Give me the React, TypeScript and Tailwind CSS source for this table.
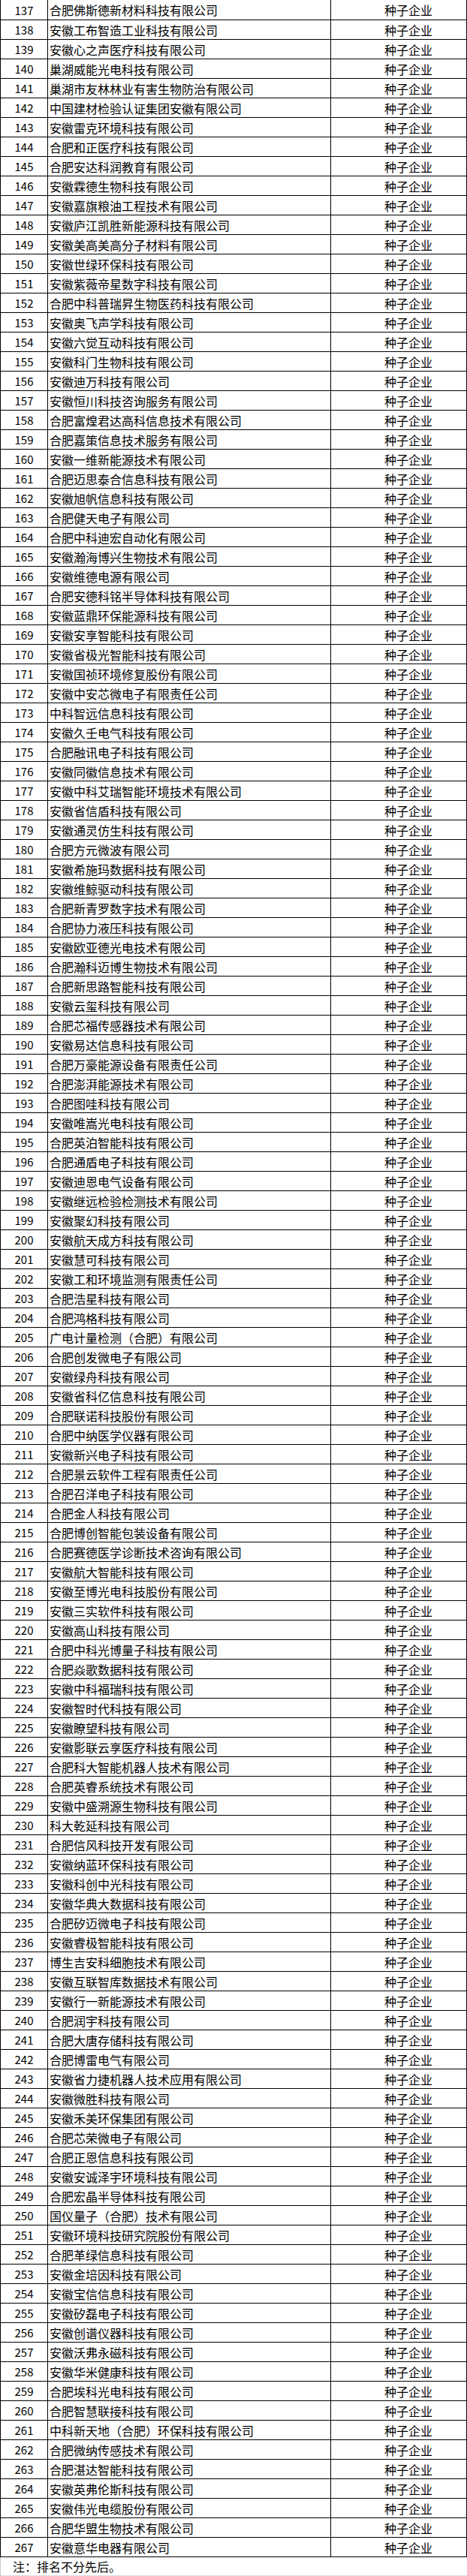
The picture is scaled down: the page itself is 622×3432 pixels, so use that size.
const names: string[] = [
  '合肥佛斯德新材料科技有限公司',
  '安徽工布智造工业科技有限公司',
  '安徽心之声医疗科技有限公司',
  '巢湖威能光电科技有限公司',
  '巢湖市友林林业有害生物防治有限公司',
  '中国建材检验认证集团安徽有限公司',
  '安徽雷克环境科技有限公司',
  '合肥和正医疗科技有限公司',
  '合肥安达科润教育有限公司',
  '安徽霖德生物科技有限公司',
  '安徽嘉旗粮油工程技术有限公司',
  '安徽庐江凯胜新能源科技有限公司',
  '安徽美高美高分子材料有限公司',
  '安徽世绿环保科技有限公司',
  '安徽紫薇帝星数字科技有限公司',
  '合肥中科普瑞昇生物医药科技有限公司',
  '安徽奥飞声学科技有限公司',
  '安徽六觉互动科技有限公司',
  '安徽科门生物科技有限公司',
  '安徽迪万科技有限公司',
  '安徽恒川科技咨询服务有限公司',
  '合肥富煌君达高科信息技术有限公司',
  '合肥嘉策信息技术服务有限公司',
  '安徽一维新能源技术有限公司',
  '合肥迈思泰合信息科技有限公司',
  '安徽旭帆信息科技有限公司',
  '合肥健天电子有限公司',
  '合肥中科迪宏自动化有限公司',
  '安徽瀚海博兴生物技术有限公司',
  '安徽维德电源有限公司',
  '合肥安德科铭半导体科技有限公司',
  '安徽蓝鼎环保能源科技有限公司',
  '安徽安享智能科技有限公司',
  '安徽省极光智能科技有限公司',
  '安徽国祯环境修复股份有限公司',
  '安徽中安芯微电子有限责任公司',
  '中科智远信息科技有限公司',
  '安徽久壬电气科技有限公司',
  '合肥融讯电子科技有限公司',
  '安徽同徽信息技术有限公司',
  '安徽中科艾瑞智能环境技术有限公司',
  '安徽省信盾科技有限公司',
  '安徽通灵仿生科技有限公司',
  '合肥方元微波有限公司',
  '安徽希施玛数据科技有限公司',
  '安徽维鲸驱动科技有限公司',
  '合肥新青罗数字技术有限公司',
  '合肥协力液压科技有限公司',
  '安徽欧亚德光电技术有限公司',
  '合肥瀚科迈博生物技术有限公司',
  '合肥新思路智能科技有限公司',
  '安徽云玺科技有限公司',
  '合肥芯福传感器技术有限公司',
  '安徽易达信息科技有限公司',
  '合肥万豪能源设备有限责任公司',
  '合肥澎湃能源技术有限公司',
  '合肥图哇科技有限公司',
  '安徽唯嵩光电科技有限公司',
  '合肥英泊智能科技有限公司',
  '合肥通盾电子科技有限公司',
  '安徽迪恩电气设备有限公司',
  '安徽继远检验检测技术有限公司',
  '安徽聚幻科技有限公司',
  '安徽航天成方科技有限公司',
  '安徽慧可科技有限公司',
  '安徽工和环境监测有限责任公司',
  '合肥浩星科技有限公司',
  '合肥鸿格科技有限公司',
  '广电计量检测（合肥）有限公司',
  '合肥创发微电子有限公司',
  '安徽绿舟科技有限公司',
  '安徽省科亿信息科技有限公司',
  '合肥联诺科技股份有限公司',
  '合肥中纳医学仪器有限公司',
  '安徽新兴电子科技有限公司',
  '合肥景云软件工程有限责任公司',
  '合肥召洋电子科技有限公司',
  '合肥金人科技有限公司',
  '合肥博创智能包装设备有限公司',
  '合肥赛德医学诊断技术咨询有限公司',
  '安徽航大智能科技有限公司',
  '安徽至博光电科技股份有限公司',
  '安徽三实软件科技有限公司',
  '安徽高山科技有限公司',
  '合肥中科光博量子科技有限公司',
  '合肥焱歌数据科技有限公司',
  '安徽中科福瑞科技有限公司',
  '安徽智时代科技有限公司',
  '安徽瞭望科技有限公司',
  '安徽影联云享医疗科技有限公司',
  '合肥科大智能机器人技术有限公司',
  '合肥英睿系统技术有限公司',
  '安徽中盛溯源生物科技有限公司',
  '科大乾延科技有限公司',
  '合肥信风科技开发有限公司',
  '安徽纳蓝环保科技有限公司',
  '安徽科创中光科技有限公司',
  '安徽华典大数据科技有限公司',
  '合肥矽迈微电子科技有限公司',
  '安徽睿极智能科技有限公司',
  '博生吉安科细胞技术有限公司',
  '安徽互联智库数据技术有限公司',
  '安徽行一新能源技术有限公司',
  '合肥润宇科技有限公司',
  '合肥大唐存储科技有限公司',
  '合肥博雷电气有限公司',
  '安徽省力捷机器人技术应用有限公司',
  '安徽微胜科技有限公司',
  '安徽禾美环保集团有限公司',
  '合肥芯荣微电子有限公司',
  '合肥正恩信息科技有限公司',
  '安徽安诚泽宇环境科技有限公司',
  '合肥宏晶半导体科技有限公司',
  '国仪量子（合肥）技术有限公司',
  '安徽环境科技研究院股份有限公司',
  '合肥革绿信息科技有限公司',
  '安徽金培因科技有限公司',
  '安徽宝信信息科技有限公司',
  '安徽矽磊电子科技有限公司',
  '安徽创谱仪器科技有限公司',
  '安徽沃弗永磁科技有限公司',
  '安徽华米健康科技有限公司',
  '合肥埃科光电科技有限公司',
  '合肥智慧联接科技有限公司',
  '中科新天地（合肥）环保科技有限公司',
  '合肥微纳传感技术有限公司',
  '合肥湛达智能科技有限公司',
  '安徽英弗伦斯科技有限公司',
  '安徽伟光电缆股份有限公司',
  '合肥华盟生物技术有限公司',
  '安徽意华电器有限公司',
];

const START = 137;

function Row({ no, name, first }: { no: number; name: string; first: boolean }) {
  return (
    <div className={`flex h-[26px] ${first ? '' : 'border-t border-black'}`}>
      <div className="w-[63px] shrink-0 border-r border-black flex items-center justify-center text-[15px]">
        {no}
      </div>
      <div className="w-[377px] shrink-0 border-r border-black flex items-center pl-[2px] whitespace-nowrap">
        {name}
      </div>
      <div className="flex-1 flex items-center pl-[71px]">种子企业</div>
    </div>
  );
}

export default function App() {
  return (
    <div className="w-[622px] bg-white text-black text-[16px] leading-none font-['Noto_Sans_CJK_SC','Noto_Sans_CJK_JP',sans-serif]">
      {/* list */}
      <div className="border-l border-r border-b border-black">
        {names.map((name, i) => (
          <Row key={i} no={START + i} name={name} first={i === 0} />
        ))}
      </div>

      {/* footnote */}
      <div className="h-[26px] border-l border-[#c8c8c8] border-b-2 border-b-[#dcdde3] flex items-center pl-[16px]">
        注：排名不分先后。
      </div>
    </div>
  );
}
